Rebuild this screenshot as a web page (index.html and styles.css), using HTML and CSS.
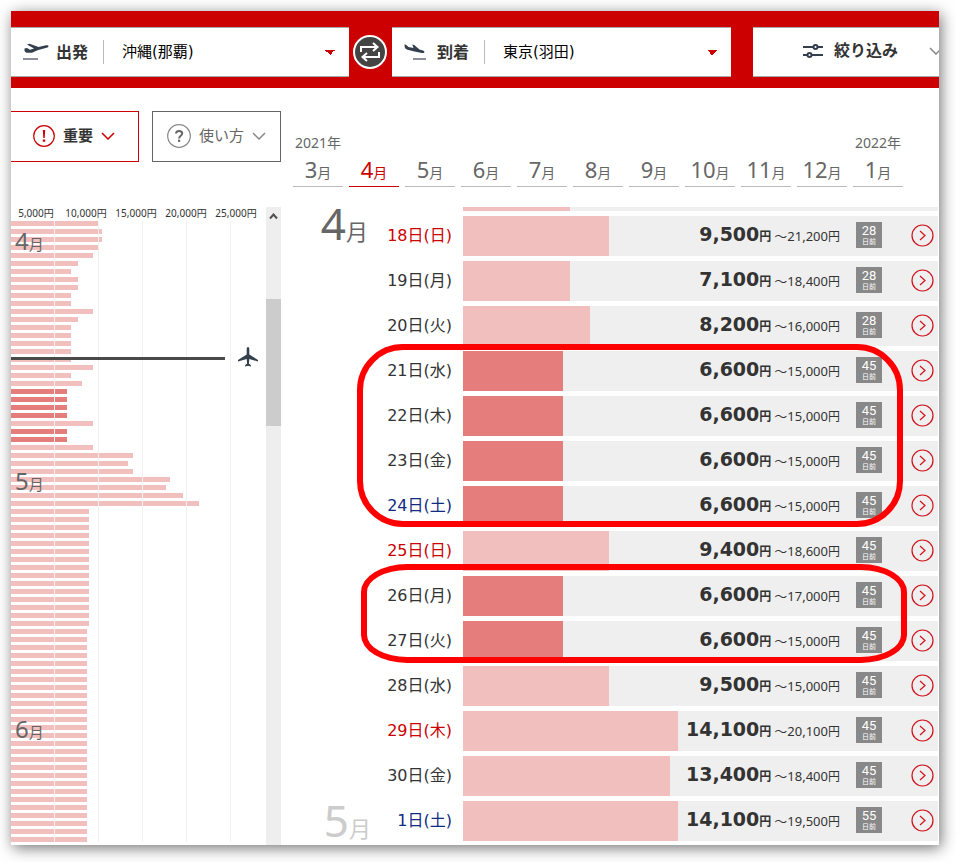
FILE: index.html
```html
<!DOCTYPE html>
<html lang="ja">
<head>
<meta charset="utf-8">
<meta name="viewport" content="width=device-width, initial-scale=1">
<title>運賃カレンダー</title>
<link rel="stylesheet" href="styles.css">
</head>
<body>
<div class="panel">
  <header class="search">
    <div class="field">
      <svg class="plane" width="28" height="20" viewBox="0 0 28 20" aria-hidden="true">
        <path fill="#333f4c" d="M2.500 6.500 5 6l3 1.800 4-1.400L5 2.500 7.500 1.800 16.500 5l6.500-1.500c2-.5 3.600-.2 3.500.8-.1 1-1.600 1.400-3 1.800l-8 2.200-5.500 2.400-4.500.1c-1.500 0-2.300-.4-3-2z"/>
        <path stroke="#8b8f9b" stroke-width="2" d="M1 17h15"/>
      </svg>
      <label class="field-label" for="from">出発</label>
      <select class="place" id="from"><option>沖縄(那覇)</option></select>
    </div>
    <button class="swap" type="button" aria-label="入れ替え">
      <svg width="34" height="34" viewBox="0 0 34 34" aria-hidden="true">
        <circle cx="17" cy="17" r="16" fill="#444" stroke="#fff" stroke-width="2"/>
        <g fill="none" stroke="#fff" stroke-width="2"><path d="M8 17v-5h16M20 8l4.500 4-4.500 4M26 17v5H10M14 18l-4.500 4 4.500 4"/></g>
      </svg>
    </button>
    <div class="field">
      <svg class="plane" width="28" height="20" viewBox="0 0 28 20" aria-hidden="true">
        <path fill="#333f4c" d="M1.500 2.200 3.300 3 5.500 5 10.500 6 9.200 2.400l2 .5 5.300 4.600 3.500 1c1.300.5 1.700 1.200 1.300 2-.5.7-1.500.7-2.500.5L11.500 9.500 4.500 7.800C3 7.200 2 6.500 1.700 5z"/>
        <path stroke="#8b8f9b" stroke-width="2" d="M10 17h13"/>
      </svg>
      <label class="field-label" for="to">到着</label>
      <select class="place" id="to"><option>東京(羽田)</option></select>
    </div>
    <button class="filter" type="button">
      <svg width="20" height="14" viewBox="0 0 20 14" aria-hidden="true">
        <g fill="none" stroke="#333f4c" stroke-width="2"><path d="M0 3h10M15 3h5M0 11h4M9 11h11"/><circle cx="12.500" cy="3" r="2"/><circle cx="6.500" cy="11" r="2"/></g>
      </svg>
      <span>絞り込み</span>
      <svg class="filter-chevron" width="14" height="8" viewBox="0 0 14 8" aria-hidden="true"><path fill="none" stroke="#888" stroke-width="1.500" d="M1 1l6 6 6-6"/></svg>
    </button>
  </header>

  <div class="content">
    <aside class="side">
      <div class="info">
        <button class="info-btn important" type="button">
          <svg width="22" height="22" viewBox="0 0 22 22" aria-hidden="true"><circle cx="11" cy="11" r="10.300" fill="none" stroke="#c00" stroke-width="1.200"/><path fill="#c00" d="M9.800 5h2.400l-.5 8h-1.400zM9.800 14.500h2.400v2.200H9.800z"/></svg>
          <span>重要</span>
          <svg width="14" height="8" viewBox="0 0 14 8" aria-hidden="true"><path fill="none" stroke="#c00" stroke-width="1.500" d="M1 1l6 6 6-6"/></svg>
        </button>
        <button class="info-btn usage" type="button">
          <svg width="24" height="24" viewBox="0 0 24 24" aria-hidden="true"><circle cx="12" cy="12" r="11.300" fill="none" stroke="#888" stroke-width="1.200"/><path fill="none" stroke="#666" stroke-width="2" d="M9 9.500c0-3.500 6.200-3.500 6.200 0 0 2.300-3.100 2.300-3.100 5"/><path fill="#666" d="M11 15.700h2.200v2.200H11z"/></svg>
          <span>使い方</span>
          <svg width="14" height="8" viewBox="0 0 14 8" aria-hidden="true"><path fill="none" stroke="#888" stroke-width="1.500" d="M1 1l6 6 6-6"/></svg>
        </button>
      </div>
      <div class="overview">
        <div class="overview-main">
          <div class="scale"><span>5,000円</span><span>10,000円</span><span>15,000円</span><span>20,000円</span><span>25,000円</span></div>
          <div class="chart" id="chart">
            <div class="marker">
              <svg width="20" height="20" viewBox="0 0 20 20" aria-hidden="true"><path fill="#333f4c" d="M10 0c.9 0 1.300 1 1.300 2.200v5.300L20 13v1.500l-8.700-2.500-.4 4.500 2 1.800V19.500L10 18.800l-2.900.7v-1.200l2-1.800-.4-4.500L0 14.500V13l8.700-5.500V2.200C8.700 1 9.100 0 10 0z"/></svg>
            </div>
          </div>
        </div>
        <div class="scrollbar">
          <svg class="scroll-up" width="9" height="7" viewBox="0 0 9 7" aria-hidden="true"><path fill="none" stroke="#505050" stroke-width="2" d="M1 5.500l3.500-4 3.500 4"/></svg>
          <div class="thumb"></div>
        </div>
      </div>
    </aside>

    <main class="main">
      <nav class="months" id="months" aria-label="月"></nav>
      <div class="days" id="days"></div>
    </main>
  </div>
</div>
<script src="script.js"></script>
</body>
</html>
```
FILE: styles.css
```css
* {
  box-sizing: border-box;
}

body {
  margin: 0;
  padding: 11px 17px 17px 11px;
  background: #fff;
  color: #333;
  font-family: "Noto Sans", "Noto Sans CJK JP", sans-serif;
  overflow-x: hidden;
}

button,
select {
  margin: 0;
  padding: 0;
  border: 0;
  border-radius: 0;
  background: none;
  color: inherit;
  font-family: inherit;
}

svg {
  display: block;
  flex: none;
}

.panel {
  background: #fff;
  box-shadow: 2px 3px 14px rgba(0, 0, 0, 0.55);
}

/* Search bar */

.search {
  display: grid;
  grid-template-columns: minmax(0, 338fr) 43px minmax(0, 339fr) 22px minmax(0, 186fr);
  padding: 16px 0 11px;
  background: #c00;
}

.field,
.filter {
  height: 50px;
  background: #fff;
  border: solid #aaa;
  border-width: 1px 0;
}

.field {
  display: flex;
  align-items: center;
  padding-left: 11px;
}

.field-label {
  margin-left: 6px;
  padding-right: 15px;
  border-right: 1px solid #bbb;
  font-size: 16px;
  font-weight: bold;
  line-height: 24px;
}

.place {
  flex: 1;
  min-width: 0;
  height: 48px;
  padding-left: 18px;
  appearance: none;
  color: #000;
  font-family: "DejaVu Sans", "Noto Sans CJK JP", sans-serif;
  font-size: 15px;
  background: linear-gradient(#c00, #c00) no-repeat right 14px top 22px / 10px 5px;
  background-image: conic-gradient(from 315deg at 50% 100%, #c00 90deg, transparent 0);
}

.swap {
  display: grid;
  place-items: center start;
  padding-left: 4px;
}

.filter {
  grid-column: 5;
  display: flex;
  align-items: center;
  padding: 0 0 2px 50px;
  font-size: 16px;
  font-weight: bold;
  line-height: 24px;
  overflow: hidden;
}

.filter span {
  margin: 0 31px 0 11px;
  padding-bottom: 2px;
  white-space: nowrap;
}

/* Columns below the bar */

.content {
  display: grid;
  grid-template-columns: 270px minmax(0, 1fr);
  column-gap: 12px;
}

.info {
  display: grid;
  grid-template-columns: 128px 129px;
  justify-content: space-between;
  padding: 23px 0 45px;
}

.info-btn {
  display: flex;
  align-items: center;
  height: 51px;
  padding-bottom: 2px;
  border: 1px solid #666;
  font-size: 15px;
  line-height: 24px;
}

.info-btn span {
  padding-bottom: 2px;
}

.important {
  gap: 8px;
  padding-left: 22px;
  border-color: #c00;
  border-left: 0;
  font-weight: bold;
}

.usage {
  gap: 8px;
  padding-left: 14px;
  color: #666;
}

/* Overview chart */

.overview {
  display: grid;
  grid-template-columns: minmax(0, 1fr) 15px;
}

.scale {
  display: grid;
  grid-template-columns: repeat(5, 50px);
  height: 14px;
  font-size: 10px;
  line-height: 12px;
  text-align: center;
  white-space: nowrap;
}

.chart {
  position: relative;
}

.chart::after {
  content: "";
  position: absolute;
  inset: 0 35px 0 0;
  background: repeating-linear-gradient(to right, transparent 0 43px, #f0f0f0 43px 44px);
}

.chart-month {
  position: relative;
}

.chart-label {
  position: absolute;
  z-index: 2;
  left: 4px;
  top: 2px;
  color: #666;
  font-size: 24px;
  line-height: 36px;
}

.chart-label small {
  font-size: 15px;
}

.bar {
  height: 5px;
  margin-bottom: 3px;
  background: #f2bfbf;
}

.bar.low,
.fill.low {
  background: #e47d7c;
}

.marker {
  position: absolute;
  z-index: 3;
  left: 0;
  right: 8px;
  top: 126px;
  display: flex;
  align-items: center;
  gap: 13px;
}

.marker::before {
  content: "";
  flex: 1;
  height: 3px;
  margin-top: 2px;
  background: #4a4a4a;
}

.scrollbar {
  background: #eee;
}

.scroll-up {
  margin: 6px 3px 79px;
}

.thumb {
  height: 127px;
  background: #ccc;
}

/* Month navigation */

.months {
  display: flex;
  gap: 6px;
  padding: 44px 0 20px;
}

.month-tab {
  flex: 0 0 50px;
  border-bottom: 1px solid #bbb;
  color: #666;
  text-align: center;
  text-decoration: none;
  white-space: nowrap;
}

.month-tab .year {
  display: block;
  height: 24px;
  font-size: 14px;
  line-height: 22px;
}

.month-tab .name {
  display: block;
  height: 30px;
  font-size: 22px;
  line-height: 26px;
}

.month-tab small {
  font-size: 14px;
}

.month-tab.current {
  border-color: #c00;
  color: #c00;
}

/* Day list */

.days {
  display: grid;
  row-gap: 5px;
  padding-bottom: 4px;
}

.group {
  position: relative;
  display: grid;
  row-gap: 5px;
}

.ring {
  position: absolute;
  z-index: 2;
  border: 6px solid #f00;
  pointer-events: none;
}

.ring-first {
  inset: -7px 36px -1px 64px;
  border-radius: 46px;
}

.ring-second {
  inset: -12px 32px -2px 68px;
  border-radius: 46px / 28px;
}

.day {
  display: grid;
  grid-template-columns: 80px 79px minmax(0, 1fr);
  grid-template-rows: minmax(0, 1fr);
  height: 40px;
  margin-right: 1px;
}

.day.cut {
  height: 4px;
}

.month {
  padding-right: 5px;
  color: #666;
  font-size: 44px;
  line-height: 14px;
  text-align: right;
  white-space: nowrap;
}

.month small {
  font-size: 22px;
}

.month.next {
  align-self: end;
  padding-right: 2px;
  color: #ccc;
  line-height: 26px;
}

.date {
  font-family: "DejaVu Sans", "Noto Sans CJK JP", sans-serif;
  font-size: 16px;
  line-height: 40px;
  text-align: right;
  white-space: nowrap;
}

.date.holiday {
  color: #c00;
}

.date.saturday {
  color: #0f2b82;
}

.track {
  display: grid;
  grid-template-columns: minmax(0, 1fr);
  grid-template-rows: minmax(0, 1fr);
  margin-left: 11px;
  background: #efefef;
}

.fill,
.fare {
  grid-area: 1 / 1;
}

.fill {
  background: #f2bfbf;
}

.fare {
  display: flex;
  align-items: center;
  justify-content: flex-end;
  padding: 0 4px 2px 0;
}

.price {
  font-size: 12px;
  line-height: 38px;
  white-space: nowrap;
}

.price b {
  font-family: "DejaVu Sans", "Noto Sans CJK JP", sans-serif;
  font-size: 19px;
}

.price strong {
  margin-right: 3px;
  font-size: 12px;
}

.price span {
  font-size: 13px;
}

.badge {
  width: 26px;
  height: 26px;
  margin: 0 29px 0 16px;
  padding-top: 1px;
  background: #888;
  color: #fff;
  font-family: Roboto, "Noto Sans CJK JP", sans-serif;
  font-size: 13px;
  line-height: 15px;
  text-align: center;
}

.badge small {
  display: block;
  font-size: 7px;
  line-height: 9px;
}
```
FILE: script.js
```js
// Overview bars: [width in px, repeat, low fare]
const overview = [
  ['4', [[87], [91, 2], [87], [82], [67], [60], [67, 2], [60, 2], [82], [67], [60, 5], [82], [60], [71], [56, 4, 1], [82], [56, 2, 1], [82], [122]]],
  ['5', [[117], [122], [159], [155], [172], [188], [78, 15], [76, 10]]],
  ['6', [[76, 17]]],
];

document.getElementById('chart').insertAdjacentHTML('afterbegin', overview.map(([month, bars]) =>
  `<div class="chart-month"><div class="chart-label">${month}<small>月</small></div>` +
  bars.map(([width, count = 1, low]) =>
    `<div class="bar${low ? ' low' : ''}" style="width:${width}px"></div>`.repeat(count)).join('') +
  '</div>').join(''));

const months = [3, 4, 5, 6, 7, 8, 9, 10, 11, 12, 1];
document.getElementById('months').innerHTML = months.map((m) => {
  const year = m === 3 ? '2021年' : m === 1 ? '2022年' : '';
  return `<a href="#" class="month-tab${m === 4 ? ' current' : ''}"><span class="year">${year}</span><span class="name">${m}<small>月</small></span></a>`;
}).join('');

const chevron = '<button type="button" aria-label="詳細"><svg width="23" height="23" viewBox="0 0 23 23" aria-hidden="true"><g fill="none" stroke="#d0111b" stroke-width="1.200"><circle cx="11.500" cy="11.500" r="10.500"/><path d="M9 7l5 4.500L9 16"/></g></svg></button>';

// Day rows: [date, weekday, bar share in %, lowest, highest, days ahead, kind]
function row([date, weekday, share, lowest, highest, ahead, kind = '']) {
  const low = lowest === '6,600' ? ' low' : '';
  const month = date === 18 ? '<div class="month">4<small>月</small></div>'
    : date === 1 ? '<div class="month next">5<small>月</small></div>' : '<div></div>';
  return `<div class="day">${month}<div class="date ${kind}">${date}日(${weekday})</div>
    <div class="track"><div class="fill${low}" style="width:${share}%"></div>
    <div class="fare"><div class="price"><b>${lowest}</b><strong>円</strong><span>～${highest}</span>円</div>
    <div class="badge">${ahead}<small>日前</small></div>${chevron}</div></div></div>`;
}

const group = (ring, rows) => `<div class="group">${rows.map(row).join('')}<div class="ring ${ring}"></div></div>`;

document.getElementById('days').innerHTML =
  '<div class="day cut"><div></div><div></div><div class="track"><div class="fill" style="width:22.5%"></div></div></div>' +
  [
    [18, '日', 30.7, '9,500', '21,200', 28, 'holiday'],
    [19, '月', 22.5, '7,100', '18,400', 28],
    [20, '火', 26.7, '8,200', '16,000', 28],
  ].map(row).join('') +
  group('ring-first', [
    [21, '水', 21, '6,600', '15,000', 45],
    [22, '木', 21, '6,600', '15,000', 45],
    [23, '金', 21, '6,600', '15,000', 45],
    [24, '土', 21, '6,600', '15,000', 45, 'saturday'],
  ]) +
  row([25, '日', 30.7, '9,400', '18,600', 45, 'holiday']) +
  group('ring-second', [
    [26, '月', 21, '6,600', '17,000', 45],
    [27, '火', 21, '6,600', '15,000', 45],
  ]) +
  [
    [28, '水', 30.7, '9,500', '15,000', 45],
    [29, '木', 45.3, '14,100', '20,100', 45, 'holiday'],
    [30, '金', 43.6, '13,400', '18,400', 45],
    [1, '土', 45.3, '14,100', '19,500', 55, 'saturday'],
  ].map(row).join('');
```
